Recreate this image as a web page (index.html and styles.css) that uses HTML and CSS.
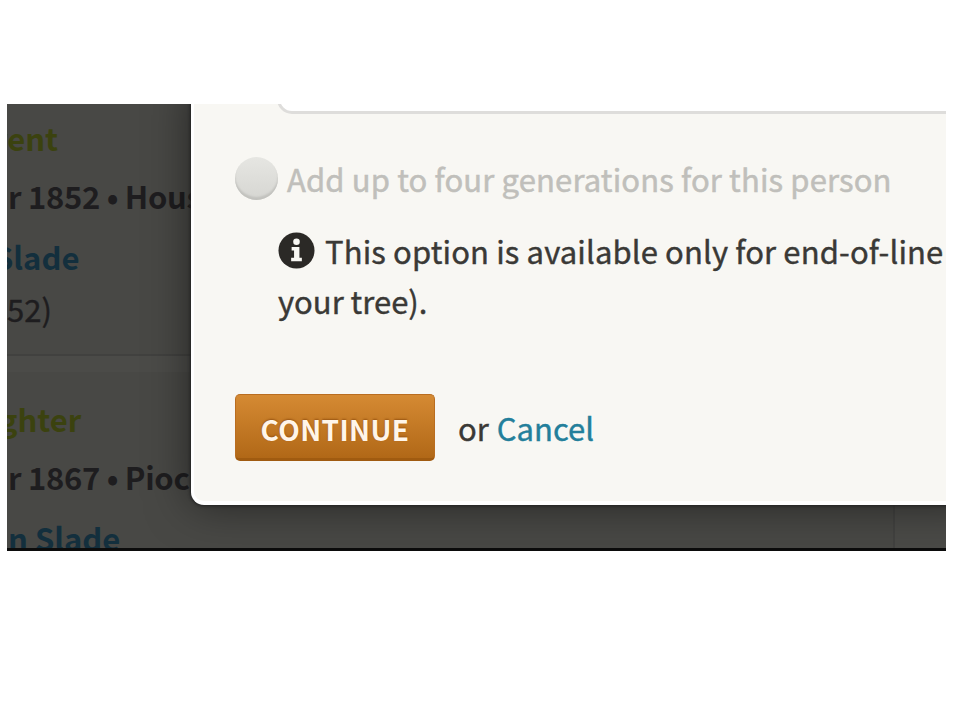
FILE: index.html
```html
<!DOCTYPE html>
<html lang="en">
<head>
<meta charset="utf-8">
<title>Add person</title>
<link rel="stylesheet" href="styles.css">
</head>
<body>
<main class="viewport">
  <section class="results">
    <article class="record">
      <div class="relation parent"><span>rent</span></div>
      <div class="event"><span>r 1852 • Hous</span></div>
      <div class="name name-first"><span>Slade</span></div>
      <div class="years"><span>52)</span></div>
    </article>
    <article class="record">
      <div class="relation daughter"><span>ghter</span></div>
      <div class="event"><span>r 1867 • Pioc</span></div>
      <div class="name name-second"><span>n Slade</span></div>
    </article>
  </section>
  <div class="bottom-edge"></div>
  <section class="modal">
    <div class="option-box"></div>
    <div class="choice"><i class="radio"></i><span class="choice-label">Add up to four generations for this person</span></div>
    <div class="note">
      <div class="note-line">
        <svg class="info" viewBox="0 0 38 38"><circle cx="19" cy="19" r="18.5" fill="#2b2926"/><circle cx="19" cy="10" r="3.4" fill="#f8f7f3"/><path d="M14 15.5H22V26.5H24.5V30H13.5V26.5H16.5V19H14Z" fill="#f8f7f3"/></svg>
        <span class="note-first">This option is available only for end-of-line</span>
      </div>
      <div class="note-line"><span class="note-second">your tree).</span></div>
    </div>
    <div class="actions"><button class="continue"><span>CONTINUE</span></button><span class="or">or</span><a class="cancel">Cancel</a></div>
  </section>
</main>
</body>
</html>
```
FILE: styles.css
```css
* { box-sizing: border-box; }
body { margin: 0; background: #fff; font-family: "Noto Sans CJK JP", "Noto Sans", sans-serif; color: #3a3936; }
span, a { white-space: nowrap; }
.viewport { position: relative; width: 939px; height: 447px; margin: 104px 0 0 7px; overflow: hidden; background: #4a4a47; }
.results { width: 888px; height: 447px; background: #4b4b48; border-right: 2px solid #424240; }
.record { height: 252px; padding-top: 4px; background: #484845; border-bottom: 2px solid #41413f; font-size: 31px; line-height: 60px; color: #1e1d1f; }
.record + .record { height: 179px; margin-top: 16px; padding-top: 17px; border: 0; }
.record div { height: 60px; }
.record .relation { height: 58px; color: #3b420f; font-weight: 700; }
.parent { margin-left: -13px; }
.daughter { margin-left: -8px; }
.name-first { margin-left: -13px; }
.record .event { height: 61px; padding-left: 1px; font-weight: 700; letter-spacing: -.3px; }
.record .name { color: #132f3d; font-weight: 700; }
.record .name-second { padding-left: 1px; }
.record .years { height: 50px; line-height: 44px; -webkit-text-stroke: .4px; }
.bottom-edge { position: absolute; left: 0; right: 0; bottom: 0; height: 3px; background: #0c0c0c; }
.modal { position: absolute; left: 184px; top: -20px; width: 790px; height: 421px; background: #f8f7f3; border: 2px solid #fff; border-width: 0 0 4px 3px; border-radius: 0 0 0 13px; box-shadow: 0 0 3px 1px #222, 0 0 44px rgba(0,0,0,.5); font-size: 31px; padding-left: 41px; }
.option-box { height: 30px; margin-left: 42px; background: #fff; border: 3px solid #dedddb; border-radius: 0 0 0 15px; }
.choice { display: flex; height: 60px; margin-top: 34px; align-items: center; color: #c0bfbb; }
.choice-label { letter-spacing: .14px; -webkit-text-stroke: .5px; }
.radio { width: 43px; height: 43px; margin-right: 9px; border-radius: 50%; background: linear-gradient(#e6e6e2, #d6d6d2); box-shadow: inset 0 -3px 2px #c2c2be; }
.note { margin: 17px 0 0 43px; }
.note-line { display: flex; height: 50px; align-items: center; }
.note-first { letter-spacing: .13px; }
.note-line span, .or, .cancel { -webkit-text-stroke: .4px; }
.info { width: 37px; height: 37px; margin: 1px 10px 0 0; }
.actions { display: flex; height: 67px; margin-top: 69px; align-items: center; }
.continue { width: 200px; height: 67px; padding: 5px 0 0; border: 1px solid #b96d20; border-bottom: 3px solid #a05b10; border-radius: 5px; background: linear-gradient(#d58a33, #b16817); color: #fff5e9; font: 700 28px "Noto Sans CJK JP", sans-serif; letter-spacing: .4px; text-shadow: 0 -1px 2px #985412; }
.or { margin-left: 23px; }
.cancel { margin-left: 8px; color: #237f9b; }
```
